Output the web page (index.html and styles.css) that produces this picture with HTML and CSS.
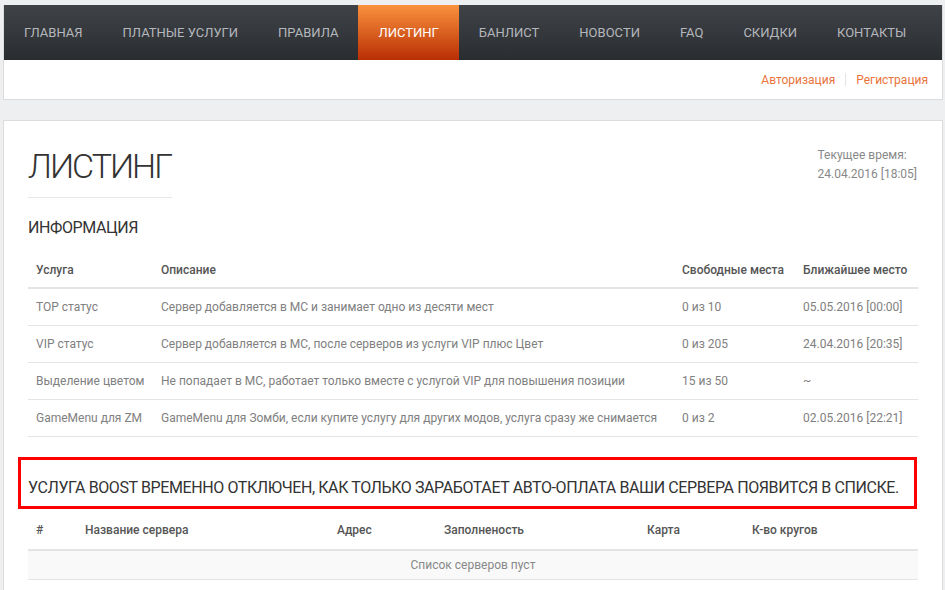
FILE: index.html
```html
<!DOCTYPE html>
<html lang="ru">
<head>
    <meta charset="UTF-8">
    <title>Листинг</title>
    <link rel="stylesheet" href="styles.css">
</head>
<body>
<div id="header">
    <ul id="menu">
        <li><a href="#">Главная</a></li>
        <li><a href="#">Платные услуги</a></li>
        <li><a href="#">Правила</a></li>
        <li class="active"><a href="#">Листинг</a></li>
        <li><a href="#">Банлист</a></li>
        <li><a href="#">Новости</a></li>
        <li><a href="#">FAQ</a></li>
        <li><a href="#">Скидки</a></li>
        <li><a href="#">Контакты</a></li>
    </ul>
    <div id="userbar">
        <a href="#">Авторизация</a>
        <span class="sep"></span>
        <a href="#">Регистрация</a>
    </div>
</div>
<div id="content">
    <div class="top">
        <h1 class="title">Листинг</h1>
        <div class="clock">Текущее время:<br>24.04.2016 [18:05]</div>
    </div>
    <h2 class="subtitle">Информация</h2>
    <table class="grid info">
        <thead>
        <tr>
            <th class="c1">Услуга</th>
            <th class="c2">Описание</th>
            <th class="c3">Свободные места</th>
            <th class="c4">Ближайшее место</th>
        </tr>
        </thead>
        <tbody>
        <tr>
            <td>TOP статус</td>
            <td>Сервер добавляется в МС и занимает одно из десяти мест</td>
            <td>0 из 10</td>
            <td>05.05.2016 [00:00]</td>
        </tr>
        <tr>
            <td>VIP статус</td>
            <td>Сервер добавляется в МС, после серверов из услуги VIP плюс Цвет</td>
            <td>0 из 205</td>
            <td>24.04.2016 [20:35]</td>
        </tr>
        <tr>
            <td>Выделение цветом</td>
            <td>Не попадает в МС, работает только вместе с услугой VIP для повышения позиции</td>
            <td>15 из 50</td>
            <td>~</td>
        </tr>
        <tr>
            <td>GameMenu для ZM</td>
            <td>GameMenu для Зомби, если купите услугу для других модов, услуга сразу же снимается</td>
            <td>0 из 2</td>
            <td>02.05.2016 [22:21]</td>
        </tr>
        </tbody>
    </table>
    <div class="notice">Услуга BOOST временно отключен, как только заработает авто-оплата ваши сервера появится в списке.</div>
    <table class="grid servers">
        <thead>
        <tr>
            <th class="s1">#</th>
            <th class="s2">Название сервера</th>
            <th class="s3">Адрес</th>
            <th class="s4">Заполненость</th>
            <th class="s5">Карта</th>
            <th class="s6">К-во кругов</th>
        </tr>
        </thead>
        <tbody>
        <tr class="empty">
            <td colspan="6">Список серверов пуст</td>
        </tr>
        </tbody>
    </table>
</div>
</body>
</html>
```

FILE: styles.css
```css
body {
    margin: 0;
    padding: 5px 2px 0 3px;
    background: #eeeff1;
    font-family: Roboto, "Liberation Sans", sans-serif;
    font-size: 12px;
    color: #808080;
}

a {
    text-decoration: none;
}

#header {
    background: #fff;
    border: 1px solid #dcdcdc;
    border-top: 0;
}

#menu {
    display: flex;
    margin: 0;
    padding: 0;
    list-style-type: none;
    height: 55px;
    background: linear-gradient(#3f4247, #2a2d30);
}

#menu a {
    display: block;
    padding: 0 20px;
    line-height: 55px;
    font-size: 13px;
    white-space: nowrap;
    text-transform: uppercase;
    color: #b4b8bd;
}

#menu .active a {
    background: linear-gradient(#fa923d, #b92e04);
    color: #fff;
}

#userbar {
    display: flex;
    justify-content: flex-end;
    align-items: center;
    height: 39px;
    padding-right: 14px;
}

#userbar a {
    color: #e8743c;
}

#userbar .sep {
    width: 1px;
    height: 13px;
    margin: 0 10px;
    background: #e4e4e4;
}

#content {
    margin-top: 20px;
    background: #fff;
    border: 1px solid #dcdcdc;
    border-bottom: 0;
    padding: 25px 24px 20px 24px;
    height: 460px;
}

.top {
    display: flex;
    justify-content: space-between;
    align-items: flex-start;
}

.title {
    margin: 0;
    padding-bottom: 11px;
    border-bottom: 1px solid #e8e8e8;
    width: 144px;
    font-size: 34px;
    font-weight: 300;
    letter-spacing: -2px;
    line-height: 40px;
    text-transform: uppercase;
    color: #333;
}

.clock {
    margin-right: 1px;
    line-height: 19px;
    color: #888;
}

.subtitle {
    margin: 20px 0 14px;
    font-size: 16px;
    font-weight: 400;
    letter-spacing: -0.4px;
    line-height: 20px;
    text-transform: uppercase;
    color: #333;
}

.grid {
    width: 890px;
    border-collapse: collapse;
    table-layout: fixed;
}

.grid th,
.grid td {
    box-sizing: border-box;
    padding: 0 8px;
    white-space: nowrap;
    text-align: left;
}

.grid th {
    height: 36px;
    font-weight: 500;
    color: #555;
    border-bottom: 2px solid #e4e4e4;
}

.grid td {
    height: 37px;
    border-bottom: 1px solid #e4e4e4;
    color: #808080;
}

.info .c1 { width: 125px; }
.info .c2 { width: 521px; }
.info .c3 { width: 121px; }

.notice {
    margin: 20px 1px 2px -10px;
    border: 3px solid #f00;
    padding: 18px 7px 8px;
    font-size: 16px;
    letter-spacing: -0.4px;
    line-height: 20px;
    white-space: nowrap;
    text-transform: uppercase;
    color: #333;
}

.servers th {
    height: 39px;
}

.servers .s1 { width: 49px; }
.servers .s2 { width: 252px; }
.servers .s3 { width: 107px; }
.servers .s4 { width: 203px; }
.servers .s5 { width: 105px; }

.servers .empty td {
    height: 30px;
    background: #f9f9f9;
    text-align: center;
    color: #888;
}
```
